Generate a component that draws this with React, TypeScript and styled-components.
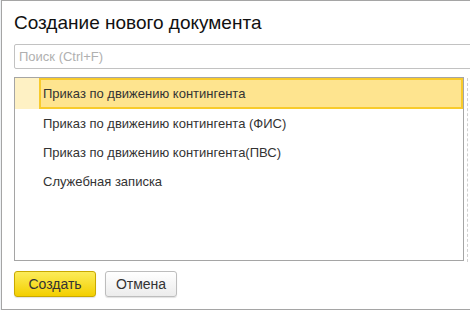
import React from 'react';
import styled, { createGlobalStyle } from 'styled-components';

const GlobalStyle = createGlobalStyle`
  html, body {
    margin: 0;
    padding: 0;
    background: #eef1f4;
  }
  body {
    font-family: 'Liberation Sans', Arial, sans-serif;
  }
`;

const Page = styled.div`
  width: 470px;
  height: 310px;
  padding-left: 1px;
  box-sizing: border-box;
  overflow: hidden;
`;

const Window = styled.div`
  height: 310px;
  box-sizing: border-box;
  background: #fff;
  border-top: 1px solid #a5a5a5;
  border-bottom: 1px solid #a5a5a5;
  border-left: 1px solid #a5a5a5;
  padding-left: 12px;
  display: flex;
  flex-direction: column;
  overflow: hidden;
`;

const Title = styled.h1`
  margin: 10px 0 0;
  font-size: 19px;
  line-height: 24px;
  font-weight: normal;
  color: #111;
`;

const Search = styled.input`
  margin-top: 9px;
  width: 470px;
  height: 25px;
  box-sizing: border-box;
  border: 1px solid #c2c2c2;
  border-radius: 2px;
  padding: 0 4px;
  font-family: inherit;
  font-size: 13px;
  color: #333;
  outline: none;
  &::placeholder {
    color: #b0b0b0;
  }
`;

const ListArea = styled.div`
  margin-top: 8px;
  display: flex;
  align-items: stretch;
`;

const List = styled.div`
  width: 450px;
  height: 184px;
  box-sizing: border-box;
  border: 1px solid #a5a5a5;
  display: flex;
  flex-direction: column;
`;

const ScrollRail = styled.div`
  margin: 1px 0 0 3px;
  width: 0;
  height: 184px;
  border-left: 1px dashed #d0d0d0;
`;

const Row = styled.div<{ $selected?: boolean }>`
  display: flex;
  height: ${({ $selected }) => ($selected ? '31px' : '29px')};
  flex-shrink: 0;
  background: ${({ $selected }) => ($selected ? '#fef1c4' : 'transparent')};
`;

const Gutter = styled.div`
  width: 24px;
  flex-shrink: 0;
`;

const Cell = styled.div<{ $selected?: boolean }>`
  flex: 1;
  display: flex;
  align-items: center;
  padding-left: ${({ $selected }) => ($selected ? '2px' : '4px')};
  box-sizing: border-box;
  font-size: 13px;
  color: #333;
  ${({ $selected }) =>
    $selected &&
    `
    background: #fee48f;
    border: 2px solid #f8cb2c;
  `}
`;

const Footer = styled.div`
  margin-top: 9px;
  display: flex;
  gap: 9px;
`;

const Button = styled.button<{ $primary?: boolean; $width: number }>`
  width: ${({ $width }) => $width}px;
  height: 26px;
  box-sizing: border-box;
  padding: 0;
  border-radius: 3px;
  font-family: inherit;
  font-size: 14px;
  color: #333;
  cursor: pointer;
  border: 1px solid ${({ $primary }) => ($primary ? '#c9a900' : '#bdbdbd')};
  background: ${({ $primary }) =>
    $primary
      ? 'linear-gradient(#fcec5a, #f3cf00)'
      : 'linear-gradient(#ffffff, #ececec)'};
  box-shadow: 0 1px 1px rgba(0, 0, 0, 0.12);
`;

const items = [
  'Приказ по движению контингента',
  'Приказ по движению контингента (ФИС)',
  'Приказ по движению контингента(ПВС)',
  'Служебная записка',
];

export default function App() {
  return (
    <Page>
      <GlobalStyle />
      <Window>
        <Title>Создание нового документа</Title>
        <Search placeholder="Поиск (Ctrl+F)" />
        <ListArea>
          <List>
            {items.map((text, i) => (
              <Row key={text} $selected={i === 0}>
                <Gutter />
                <Cell $selected={i === 0}>{text}</Cell>
              </Row>
            ))}
          </List>
          <ScrollRail />
        </ListArea>
        <Footer>
          <Button $primary $width={82}>Создать</Button>
          <Button $width={72}>Отмена</Button>
        </Footer>
      </Window>
    </Page>
  );
}
